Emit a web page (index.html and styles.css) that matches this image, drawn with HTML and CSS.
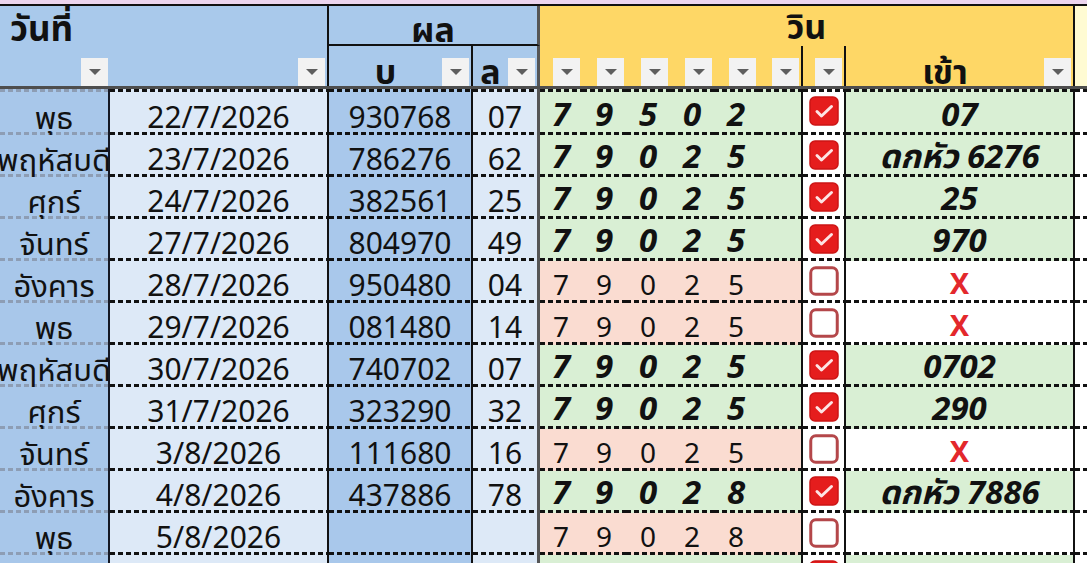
FILE: index.html
```html
<!DOCTYPE html>
<html lang="th">
<head>
<meta charset="utf-8">
<title>ผลวิน</title>
<link rel="stylesheet" href="styles.css">
</head>
<body>
<div class="top"></div>
<div class="grid head">
  <div class="hc blue h-date">วันที่</div>
  <div class="hc blue h-res">ผล</div>
  <div class="hc gold h-win">วิน</div>
  <div class="hc cream h-side"></div>

  <div class="hc2 blue"><span class="fb"></span></div>
  <div class="hc2 blue br"><span class="fb"></span></div>
  <div class="hc2 blue br"><span class="ht">บ</span><span class="fb"></span></div>
  <div class="hc2 blue brg"><span class="ht">ล</span><span class="fb"></span></div>
  <div class="hc2 gold"><span class="fb"></span></div>
  <div class="hc2 gold"><span class="fb"></span></div>
  <div class="hc2 gold"><span class="fb"></span></div>
  <div class="hc2 gold"><span class="fb"></span></div>
  <div class="hc2 gold"><span class="fb"></span></div>
  <div class="hc2 gold br"><span class="fb"></span></div>
  <div class="hc2 gold br"><span class="fb"></span></div>
  <div class="hc2 gold br"><span class="ht">เข้า</span><span class="fb"></span></div>
</div>

<div class="grid body">
  <div class="row first">
    <div class="c a">พุธ</div><div class="c b">22/7/2026</div><div class="c cc">930768</div><div class="c d">07</div>
    <div class="c e w bi">7</div><div class="c e w bi">9</div><div class="c e w bi">5</div><div class="c e w bi">0</div><div class="c e w bi">2</div><div class="c e w e6"></div>
    <div class="c f"><svg class="cb" viewBox="0 0 30 30"><rect x="1" y="1" width="28" height="28" rx="5" fill="#e51d1d" stroke="#cc1515" stroke-width="1.5"/><path d="M8 15.5l4.5 4.5L22.5 10.5" fill="none" stroke="#fde4e4" stroke-width="3" stroke-linecap="round" stroke-linejoin="round"/></svg></div>
    <div class="c g w bi">07</div><div class="c h"></div>
  </div>
  <div class="row">
    <div class="c a long">พฤหัสบดี</div><div class="c b">23/7/2026</div><div class="c cc">786276</div><div class="c d">62</div>
    <div class="c e w bi">7</div><div class="c e w bi">9</div><div class="c e w bi">0</div><div class="c e w bi">2</div><div class="c e w bi">5</div><div class="c e w e6"></div>
    <div class="c f"><svg class="cb" viewBox="0 0 30 30"><rect x="1" y="1" width="28" height="28" rx="5" fill="#e51d1d" stroke="#cc1515" stroke-width="1.5"/><path d="M8 15.5l4.5 4.5L22.5 10.5" fill="none" stroke="#fde4e4" stroke-width="3" stroke-linecap="round" stroke-linejoin="round"/></svg></div>
    <div class="c g w bi">ดกหัว 6276</div><div class="c h"></div>
  </div>
  <div class="row">
    <div class="c a">ศุกร์</div><div class="c b">24/7/2026</div><div class="c cc">382561</div><div class="c d">25</div>
    <div class="c e w bi">7</div><div class="c e w bi">9</div><div class="c e w bi">0</div><div class="c e w bi">2</div><div class="c e w bi">5</div><div class="c e w e6"></div>
    <div class="c f"><svg class="cb" viewBox="0 0 30 30"><rect x="1" y="1" width="28" height="28" rx="5" fill="#e51d1d" stroke="#cc1515" stroke-width="1.5"/><path d="M8 15.5l4.5 4.5L22.5 10.5" fill="none" stroke="#fde4e4" stroke-width="3" stroke-linecap="round" stroke-linejoin="round"/></svg></div>
    <div class="c g w bi">25</div><div class="c h"></div>
  </div>
  <div class="row">
    <div class="c a">จันทร์</div><div class="c b">27/7/2026</div><div class="c cc">804970</div><div class="c d">49</div>
    <div class="c e w bi">7</div><div class="c e w bi">9</div><div class="c e w bi">0</div><div class="c e w bi">2</div><div class="c e w bi">5</div><div class="c e w e6"></div>
    <div class="c f"><svg class="cb" viewBox="0 0 30 30"><rect x="1" y="1" width="28" height="28" rx="5" fill="#e51d1d" stroke="#cc1515" stroke-width="1.5"/><path d="M8 15.5l4.5 4.5L22.5 10.5" fill="none" stroke="#fde4e4" stroke-width="3" stroke-linecap="round" stroke-linejoin="round"/></svg></div>
    <div class="c g w bi">970</div><div class="c h"></div>
  </div>
  <div class="row">
    <div class="c a">อังคาร</div><div class="c b">28/7/2026</div><div class="c cc">950480</div><div class="c d">04</div>
    <div class="c e l rg">7</div><div class="c e l rg">9</div><div class="c e l rg">0</div><div class="c e l rg">2</div><div class="c e l rg">5</div><div class="c e l e6"></div>
    <div class="c f"><svg class="cb" viewBox="0 0 30 30"><rect x="1.75" y="1.75" width="26.5" height="26.5" rx="5" fill="#fff" stroke="#b4474a" stroke-width="3"/></svg></div>
    <div class="c g x">X</div><div class="c h"></div>
  </div>
  <div class="row">
    <div class="c a">พุธ</div><div class="c b">29/7/2026</div><div class="c cc">081480</div><div class="c d">14</div>
    <div class="c e l rg">7</div><div class="c e l rg">9</div><div class="c e l rg">0</div><div class="c e l rg">2</div><div class="c e l rg">5</div><div class="c e l e6"></div>
    <div class="c f"><svg class="cb" viewBox="0 0 30 30"><rect x="1.75" y="1.75" width="26.5" height="26.5" rx="5" fill="#fff" stroke="#b4474a" stroke-width="3"/></svg></div>
    <div class="c g x">X</div><div class="c h"></div>
  </div>
  <div class="row">
    <div class="c a long">พฤหัสบดี</div><div class="c b">30/7/2026</div><div class="c cc">740702</div><div class="c d">07</div>
    <div class="c e w bi">7</div><div class="c e w bi">9</div><div class="c e w bi">0</div><div class="c e w bi">2</div><div class="c e w bi">5</div><div class="c e w e6"></div>
    <div class="c f"><svg class="cb" viewBox="0 0 30 30"><rect x="1" y="1" width="28" height="28" rx="5" fill="#e51d1d" stroke="#cc1515" stroke-width="1.5"/><path d="M8 15.5l4.5 4.5L22.5 10.5" fill="none" stroke="#fde4e4" stroke-width="3" stroke-linecap="round" stroke-linejoin="round"/></svg></div>
    <div class="c g w bi">0702</div><div class="c h"></div>
  </div>
  <div class="row">
    <div class="c a">ศุกร์</div><div class="c b">31/7/2026</div><div class="c cc">323290</div><div class="c d">32</div>
    <div class="c e w bi">7</div><div class="c e w bi">9</div><div class="c e w bi">0</div><div class="c e w bi">2</div><div class="c e w bi">5</div><div class="c e w e6"></div>
    <div class="c f"><svg class="cb" viewBox="0 0 30 30"><rect x="1" y="1" width="28" height="28" rx="5" fill="#e51d1d" stroke="#cc1515" stroke-width="1.5"/><path d="M8 15.5l4.5 4.5L22.5 10.5" fill="none" stroke="#fde4e4" stroke-width="3" stroke-linecap="round" stroke-linejoin="round"/></svg></div>
    <div class="c g w bi">290</div><div class="c h"></div>
  </div>
  <div class="row">
    <div class="c a">จันทร์</div><div class="c b">3/8/2026</div><div class="c cc">111680</div><div class="c d">16</div>
    <div class="c e l rg">7</div><div class="c e l rg">9</div><div class="c e l rg">0</div><div class="c e l rg">2</div><div class="c e l rg">5</div><div class="c e l e6"></div>
    <div class="c f"><svg class="cb" viewBox="0 0 30 30"><rect x="1.75" y="1.75" width="26.5" height="26.5" rx="5" fill="#fff" stroke="#b4474a" stroke-width="3"/></svg></div>
    <div class="c g x">X</div><div class="c h"></div>
  </div>
  <div class="row">
    <div class="c a">อังคาร</div><div class="c b">4/8/2026</div><div class="c cc">437886</div><div class="c d">78</div>
    <div class="c e w bi">7</div><div class="c e w bi">9</div><div class="c e w bi">0</div><div class="c e w bi">2</div><div class="c e w bi">8</div><div class="c e w e6"></div>
    <div class="c f"><svg class="cb" viewBox="0 0 30 30"><rect x="1" y="1" width="28" height="28" rx="5" fill="#e51d1d" stroke="#cc1515" stroke-width="1.5"/><path d="M8 15.5l4.5 4.5L22.5 10.5" fill="none" stroke="#fde4e4" stroke-width="3" stroke-linecap="round" stroke-linejoin="round"/></svg></div>
    <div class="c g w bi">ดกหัว 7886</div><div class="c h"></div>
  </div>
  <div class="row">
    <div class="c a">พุธ</div><div class="c b">5/8/2026</div><div class="c cc"></div><div class="c d"></div>
    <div class="c e l rg">7</div><div class="c e l rg">9</div><div class="c e l rg">0</div><div class="c e l rg">2</div><div class="c e l rg">8</div><div class="c e l e6"></div>
    <div class="c f"><svg class="cb" viewBox="0 0 30 30"><rect x="1.75" y="1.75" width="26.5" height="26.5" rx="5" fill="#fff" stroke="#b4474a" stroke-width="3"/></svg></div>
    <div class="c g"></div><div class="c h"></div>
  </div>
  <div class="row last">
    <div class="c a"></div><div class="c b"></div><div class="c cc"></div><div class="c d"></div>
    <div class="c e w"></div><div class="c e w"></div><div class="c e w"></div><div class="c e w"></div><div class="c e w"></div><div class="c e w e6"></div>
    <div class="c f"><svg class="cb" viewBox="0 0 30 30"><rect x="1" y="1" width="28" height="28" rx="5" fill="#e51d1d" stroke="#cc1515" stroke-width="1.5"/></svg></div>
    <div class="c g w"></div><div class="c h"></div>
  </div>
</div>
</body>
</html>
```

FILE: styles.css
```css
html, body {
  margin: 0;
  padding: 0;
}
body {
  width: 1087px;
  height: 563px;
  overflow: hidden;
  background: #ffffff;
  color: #111111;
  font-family: "Noto Sans", "Noto Sans Thai", "DejaVu Sans", sans-serif;
}
.top {
  height: 4px;
  background: #ecd5ee;
}
.grid {
  display: grid;
  grid-template-columns: 110px 219px 144px 67px 42px 44px 44px 44px 44px 45px 43px 229px 1fr;
}

/* ---------- header ---------- */
.head {
  grid-template-rows: 40px 40px;
  border-top: 2px solid #111111;
  border-bottom: 3px solid #4e4e4e;
}
.blue { background: #a9c9eb; }
.gold { background: #fed766; }
.cream { background: #fffbd3; }

.hc {
  box-sizing: border-box;
  display: flex;
  align-items: flex-end;
  font-size: 34px;
  line-height: 30px;
  font-weight: 700;
}
.h-date {
  grid-column: 1 / 3;
  border-right: 2px solid #111111;
  padding: 0 0 3px 10px;
  font-size: 35px;
}
.h-res {
  grid-column: 3 / 5;
  justify-content: center;
  border-right: 3px solid #555555;
  border-bottom: 2px solid #111111;
  line-height: 30px;
}
.h-win {
  grid-column: 5 / 13;
  justify-content: center;
  border-right: 2px solid #111111;
  padding-bottom: 5px;
}
.h-side {
  grid-column: 13;
  grid-row: 1 / 3;
}
.hc2 {
  box-sizing: border-box;
  display: flex;
  align-items: flex-end;
  font-size: 34px;
  line-height: 28px;
  font-weight: 700;
}
.br { border-right: 2px solid #111111; }
.brg { border-right: 3px solid #555555; }
.ht {
  flex: 1;
  text-align: center;
  padding-bottom: 1px;
}
.fb {
  flex: none;
  width: 27px;
  height: 28px;
  margin: 0 2px 0 auto;
  background: #f2f2f2;
  display: flex;
  align-items: center;
  justify-content: center;
}
.fb::after {
  content: "";
  width: 0;
  height: 0;
  border-left: 6px solid transparent;
  border-right: 6px solid transparent;
  border-top: 6px solid #5e5e5e;
}

/* ---------- body ---------- */
.body {
  grid-template-rows: 46px;
  grid-auto-rows: 42px;
}
.row { display: contents; }
.c {
  --dot: #111111;
  box-sizing: border-box;
  display: flex;
  align-items: flex-end;
  justify-content: center;
  padding-bottom: 3px;
  font-size: 30px;
  line-height: 30px;
  white-space: nowrap;
  background-image: repeating-linear-gradient(90deg, var(--dot) 0 5px, transparent 5px 8px);
  background-repeat: no-repeat;
  background-size: 100% 3px;
  background-position: left bottom;
}
.first > .c {
  background-image:
    repeating-linear-gradient(90deg, var(--dot) 0 5px, transparent 5px 8px),
    repeating-linear-gradient(90deg, var(--dot) 0 5px, transparent 5px 8px);
  background-size: 100% 3px, 100% 3px;
  background-position: left top, left bottom;
}
.last > .c {
  align-items: center;
}
.a {
  --dot: #8d9db4;
  background-color: #a8c7ea;
  border-right: 2px solid #141824;
  font-size: 31px;
}
.a.long {
  overflow-x: clip;
}
.b {
  background-color: #dde9f7;
  border-right: 2px solid #111111;
}
.cc {
  background-color: #a9c8eb;
  border-right: 2px solid #111111;
}
.d {
  background-color: #dde9f7;
  border-right: 3px solid #555555;
}
.e.w { background-color: #d9efd4; }
.e.l { background-color: #fadcd1; }
.e6 { border-right: 2px solid #111111; }
.f {
  background-color: #ffffff;
  border-right: 2px solid #111111;
  align-items: center;
  padding-bottom: 3px;
}
.g {
  background-color: #ffffff;
  border-right: 2px solid #111111;
}
.g.w { background-color: #d9efd4; }
.h { background-color: #ffffff; }

.bi {
  font-weight: 700;
  font-style: italic;
  font-size: 33px;
  padding-bottom: 6px;
}
.rg {
  font-size: 28px;
  padding-bottom: 4px;
}
.x {
  color: #e3282c;
  font-weight: 700;
  font-size: 29px;
  padding-bottom: 5px;
}
.cb {
  width: 30px;
  height: 30px;
  display: block;
}
```
